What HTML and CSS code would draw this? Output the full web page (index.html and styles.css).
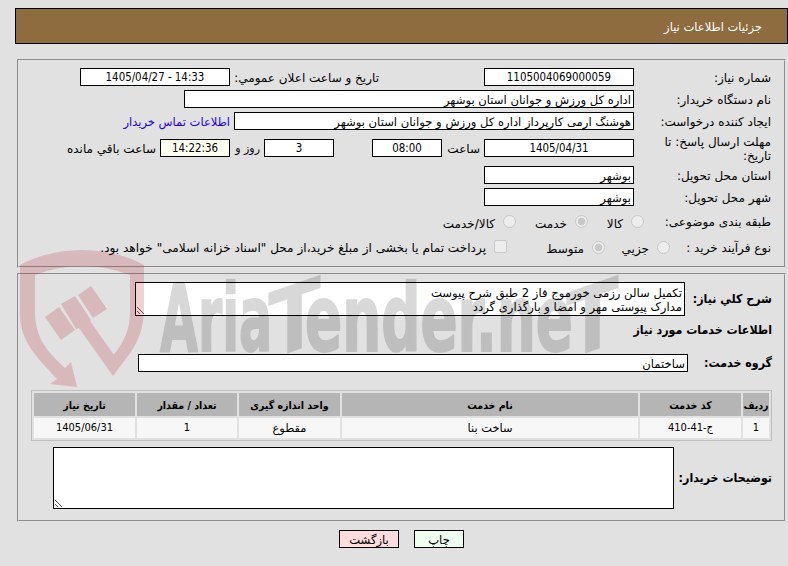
FILE: index.html
```html
<!DOCTYPE html>
<html lang="fa" dir="rtl">
<head>
  <meta charset="UTF-8" />
  <title>جزئیات اطلاعات نیاز</title>
  <link rel="stylesheet" href="styles.css">
</head>
<body>

<div class="header">جزئیات اطلاعات نیاز</div>

<fieldset class="need">
  <div class="row">
    <label>شماره نیاز:</label>
    <div class="box mid num">1105004069000059</div>
    <span class="announce">تاریخ و ساعت اعلان عمومي:</span>
    <div class="box mid num" dir="ltr">1405/04/27 - 14:33</div>
  </div>
  <div class="row">
    <label>نام دستگاه خریدار:</label>
    <div class="box org">اداره کل ورزش و جوانان استان بوشهر</div>
  </div>
  <div class="row">
    <label>ایجاد کننده درخواست:</label>
    <div class="box creator">هوشنگ ارمی کارپرداز اداره کل ورزش و جوانان استان بوشهر</div>
    <a class="contact" href="#">اطلاعات تماس خریدار</a>
  </div>
  <div class="row tall">
    <label>مهلت ارسال پاسخ: تا<br>تاریخ:</label>
    <div class="box mid num">1405/04/31</div>
    <span class="hour">ساعت</span>
    <div class="box small num">08:00</div>
    <div class="box small num days">3</div>
    <span class="day">روز و</span>
    <div class="box small num timer">14:22:36</div>
    <span class="left">ساعت باقي مانده</span>
  </div>
  <div class="row">
    <label>استان محل تحویل:</label>
    <div class="box mid">بوشهر</div>
  </div>
  <div class="row">
    <label>شهر محل تحویل:</label>
    <div class="box mid">بوشهر</div>
  </div>
  <div class="row options">
    <label>طبقه بندی موضوعی:</label>
    <i class="radio"></i><span class="opt1">کالا</span>
    <i class="radio on"></i><span class="opt2">خدمت</span>
    <i class="radio"></i><span>کالا/خدمت</span>
  </div>
  <div class="row options process">
    <label>نوع فرآیند خرید :</label>
    <i class="radio"></i><span class="opt3">جزیي</span>
    <i class="radio on"></i><span class="opt4">متوسط</span>
    <i class="check"></i><span class="treasury">پرداخت تمام یا بخشی از مبلغ خرید،از محل "اسناد خزانه اسلامی" خواهد بود.</span>
  </div>
</fieldset>

<fieldset class="detail">
  <div class="line">
    <b class="w-desc">شرح کلي نیاز:</b>
    <div class="area desc">تکمیل سالن رزمی خورموج فاز 2 طبق شرح پیوست<br>مدارک پیوستی مهر و امضا و بارگذاری گردد<svg class="grip" width="9" height="9"><path d="M1 1l7 7M1 5l3 3" /></svg></div>
  </div>
  <h2>اطلاعات خدمات مورد نیاز</h2>
  <div class="line">
    <b class="w-group">گروه خدمت:</b>
    <div class="box group">ساختمان</div>
  </div>

  <table>
    <tr>
      <th class="c1">ردیف</th>
      <th class="c2">کد خدمت</th>
      <th class="c3">نام خدمت</th>
      <th class="c4">واحد اندازه گیری</th>
      <th class="c5">تعداد / مقدار</th>
      <th class="c6">تاریخ نیاز</th>
    </tr>
    <tr>
      <td>1</td>
      <td>ج-41-410</td>
      <td class="word">ساخت بنا</td>
      <td class="word">مقطوع</td>
      <td>1</td>
      <td>1405/06/31</td>
    </tr>
  </table>

  <div class="line">
    <b class="w-note">توضیحات خریدار:</b>
    <div class="area note"><svg class="grip" width="9" height="9"><path d="M1 1l7 7M1 5l3 3" /></svg></div>
  </div>
</fieldset>

<div class="buttons">
  <button class="print">چاپ</button>
  <button class="back">بازگشت</button>
</div>

<svg class="watermark" width="788" height="566" direction="ltr">
  <g class="shield">
    <path d="M20 265Q48 250 82 250T144 265V307C144 338 132 352 113 375L112 357C124 342 130 330 130 312V275Q106 266 82 266T35 275V312C35 340 50 354 65 368L71 362L77 387L50 384L57 379C38 358 20 343 20 313Z" />
    <path d="M45 317L59 307L75 330L61 340ZM61 304L75 296L91 320L90 321L114 355L123 343V362L113 376L79 328L76 329ZM78 295L91 286L107 309L93 318Z" />
  </g>
  <g class="brand">
    <text x="160" y="351" font-size="92" textLength="112" lengthAdjust="spacingAndGlyphs">Aria</text>
    <text class="tee" transform="translate(268 360) skewY(-19)" font-size="92" textLength="53" lengthAdjust="spacingAndGlyphs">T</text>
    <text x="305" y="351" font-size="92" textLength="268" lengthAdjust="spacingAndGlyphs">ender.ne</text>
    <text class="tee" transform="translate(566 360) skewY(-19)" font-size="92" textLength="53" lengthAdjust="spacingAndGlyphs">T</text>
  </g>
</svg>

</body>
</html>
```

FILE: styles.css
```css
body {
  margin: 0;
  padding-top: 8px;
  height: 558px;
  position: relative;
  overflow: hidden;
  background: #e1e1e1;
  color: #000;
  font-family: "DejaVu Sans", sans-serif;
  font-size: 12px;
  line-height: 14px;
}

* {
  box-sizing: border-box;
}

.header {
  margin-left: 15px;
  height: 36px;
  padding-right: 25px;
  border: 1px solid #000;
  background: #8f6c3f;
  color: #fff;
  font-size: 11.5px;
  line-height: 36px;
}

fieldset {
  margin: 0 2px 0 17px;
  border: 2px groove #e1e1e1;
  white-space: nowrap;
}

.need {
  margin-top: 15px;
  height: 209px;
  padding: 5px 13px 0 0;
}

.row {
  display: flex;
  align-items: center;
  height: 22px;
}

.row label {
  flex: none;
  width: 137px;
  padding-top: 1px;
}

.row.tall {
  height: 32px;
}

.box {
  flex: none;
  height: 18px;
  padding: 1px 2px 0;
  border: 1px solid #000;
  background: #fff;
  font-size: 11.6px;
  line-height: 16px;
}

.num {
  padding-top: 0;
  text-align: center;
  font-family: "DejaVu Sans Condensed", "DejaVu Sans", sans-serif;
  font-stretch: condensed;
  font-size: 11.4px;
}

.mid {
  width: 150px;
}

.small {
  width: 70px;
}

.org {
  width: 450px;
}

.creator {
  width: 400px;
}

.announce {
  width: 254px;
  padding: 1px 105px 0 0;
}

.contact {
  margin-right: 4px;
  padding-top: 1px;
  color: #1a00e8;
  font-size: 11.5px;
  text-decoration: none;
}

.hour {
  width: 42px;
  padding: 1px 4px 0 0;
}

.days {
  margin-right: 38px;
}

.day {
  width: 34px;
  padding: 1px 4px 0 0;
  font-size: 11px;
}

.timer {
  background: #fffff0;
}

.left {
  padding: 1px 4px 0 0;
}

.options {
  height: 27px;
}

.options label {
  width: 127px;
}

.options.process {
  height: 24px;
}

.options.process label {
  width: 101px;
}

.options span {
  padding: 4px 8px 0 0;
}

.options .treasury {
  padding-top: 2px;
  font-size: 12.1px;
}

.radio,
.check {
  flex: none;
  width: 13px;
  height: 13px;
  border: 1px solid #c8c8c8;
  border-radius: 50%;
  background: #ededed;
}

.radio.on {
  background: radial-gradient(circle, #c8c8c8 3.5px, #ededed 4.2px);
}

.check {
  margin-top: -2px;
  border-radius: 2px;
}

.options .opt1 {
  width: 43px;
}

.options .opt2 {
  width: 59px;
}

.options .opt3 {
  width: 52px;
}

.options .opt4 {
  width: 85px;
}

.detail {
  margin-top: 5px;
  height: 249px;
  padding: 7px 12px 0 12px;
}

.line {
  display: flex;
  align-items: center;
}

.line b,
h2 {
  font-family: "DejaVu Sans Condensed", "DejaVu Sans", sans-serif;
  font-stretch: condensed;
  font-size: 12.3px;
}

.area {
  position: relative;
  border: 1px solid #000;
  background: #fff;
}

.desc {
  width: 550px;
  height: 34px;
  padding: 3px 2px;
  font-size: 11.6px;
}

.grip {
  position: absolute;
  left: 0;
  bottom: 0;
  stroke: #555;
  fill: none;
}

.w-desc {
  width: 87px;
}

h2 {
  margin: 7px 0 0;
  height: 31px;
}

.w-group {
  width: 84px;
}

.group {
  width: 550px;
}

table {
  width: 741px;
  height: 51px;
  margin-top: 18px;
  border: 1px solid #bfbfbf;
  border-spacing: 2px;
  table-layout: fixed;
  font-family: "DejaVu Sans Condensed", "DejaVu Sans", sans-serif;
  font-stretch: condensed;
  font-size: 11px;
}

th,
td {
  padding: 0;
  text-align: center;
}

th {
  height: 23px;
  background: #b5b5b5;
  font-size: 10.5px;
}

td {
  height: 20px;
  background: #f7f7f7;
}

.word {
  font-family: "DejaVu Sans", sans-serif;
  font-stretch: normal;
  font-size: 11.4px;
}

.c1 {
  width: 26px;
}

.c2 {
  width: 101px;
}

.c4 {
  width: 101px;
}

.c5 {
  width: 100px;
}

.c6 {
  width: 101px;
}

.detail .line:last-child {
  margin-top: 6px;
}

.w-note {
  width: 98px;
}

.note {
  width: 621px;
  height: 62px;
}

.buttons {
  display: flex;
  gap: 15px;
  margin: 8px 324px 0 0;
}

.buttons button {
  height: 18px;
  padding: 2px 0 0;
  border: 1px solid #000;
  font: inherit;
  font-size: 11.6px;
  line-height: 15px;
}

.print {
  width: 50px;
  background: #efffef;
}

.back {
  width: 60px;
  background: #fdd;
}

.watermark {
  position: absolute;
  top: 0;
  left: 0;
  pointer-events: none;
}

.shield {
  fill: #b4141e;
  opacity: .19;
}

.brand {
  font-family: "DejaVu Sans Condensed", sans-serif;
  font-weight: bold;
  stroke: #000;
  stroke-width: 2;
  stroke-linejoin: round;
  opacity: .15;
}

.brand .tee {
  stroke: none;
}
```
